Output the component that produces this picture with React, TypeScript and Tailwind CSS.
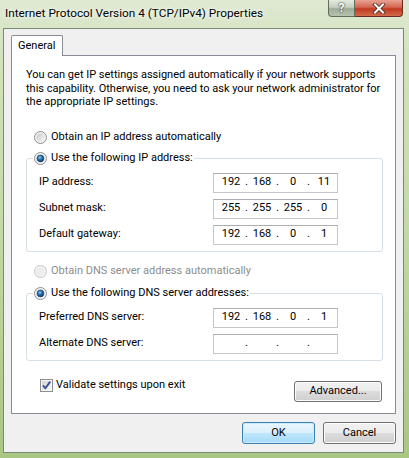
import React from 'react';

const Radio = ({ checked, disabled }: { checked?: boolean; disabled?: boolean }) => (
  <svg width="13" height="13" viewBox="0 0 13 13" className="shrink-0">
    <defs>
      <linearGradient id="radioIn" x1="0" y1="0" x2="1" y2="1">
        <stop offset="0" stopColor="#c9c9c9" />
        <stop offset="1" stopColor="#f7f7f7" />
      </linearGradient>
      <radialGradient id="radioDot" cx="0.4" cy="0.35" r="0.7">
        <stop offset="0" stopColor="#8fd0f5" />
        <stop offset="0.45" stopColor="#2a6fb0" />
        <stop offset="1" stopColor="#0d2f5c" />
      </radialGradient>
    </defs>
    <circle cx="6.5" cy="6.5" r="6" fill="#f4f4f4" stroke={disabled ? '#c4c4c4' : '#8c8f92'} />
    <circle cx="6.5" cy="6.5" r="4.3" fill={disabled ? '#ececec' : 'url(#radioIn)'} />
    {checked && <circle cx="6.5" cy="6.5" r="3.4" fill="url(#radioDot)" stroke="#1b3f6a" strokeWidth="0.6" />}
  </svg>
);

const Checkbox = () => (
  <svg width="13" height="13" viewBox="0 0 13 13" className="shrink-0">
    <defs>
      <linearGradient id="cbIn" x1="0" y1="0" x2="1" y2="1">
        <stop offset="0" stopColor="#d2d2d2" />
        <stop offset="1" stopColor="#fbfbfb" />
      </linearGradient>
    </defs>
    <rect x="0.5" y="0.5" width="12" height="12" fill="#f6f6f6" stroke="#8e8f8f" />
    <rect x="2" y="2" width="9" height="9" fill="url(#cbIn)" />
    <path d="M3 6.3 L5.4 9.3 L10.2 2.6" fill="none" stroke="#3c4f8f" strokeWidth="1.9" strokeLinejoin="round" />
  </svg>
);

const IpBox = ({ parts }: { parts: string[] }) => (
  <div className="w-[125px] h-[20px] border border-[#c3c7cc] border-t-[#abadb3] bg-white flex items-center pl-[4px]">
    {parts.map((p, i) => (
      <React.Fragment key={i}>
        {i > 0 && <span className="w-[5px] text-center">.</span>}
        <span className="w-[26px] text-center">{p}</span>
      </React.Fragment>
    ))}
  </div>
);

const FieldRow = ({ label, parts }: { label: string; parts: string[] }) => (
  <div className="flex items-center h-[20px] pl-[6px]">
    <span className="w-[174px]">{label}</span>
    <IpBox parts={parts} />
  </div>
);

const Group = ({ legend, children }: { legend: string; children: React.ReactNode }) => (
  <fieldset className="border border-[#d5dfe5] rounded-[3px] pl-[6px] pr-0 pb-[6px]">
    <legend className="px-[1px] h-[16px] flex items-center gap-[4px]">
      <Radio checked />
      <span>{legend}</span>
    </legend>
    <div className="flex flex-col gap-[6px] mt-[6px]">{children}</div>
  </fieldset>
);

const WinButton = ({ label, primary }: { label: string; primary?: boolean }) => (
  <div
    className={
      primary
        ? 'w-[73px] h-[22px] rounded-[3px] border border-[#3c7fb1] bg-[linear-gradient(180deg,#eaf6fd_0%,#d9f0fc_50%,#bee6fd_50%,#a7d9f5_100%)] flex items-center justify-center shadow-[inset_0_0_0_1px_#c9ecff]'
        : 'w-[73px] h-[22px] rounded-[3px] border border-[#707070] bg-[linear-gradient(180deg,#f2f2f2_0%,#ebebeb_50%,#dddddd_50%,#cfcfcf_100%)] flex items-center justify-center shadow-[inset_0_0_0_1px_#fcfcfc]'
    }
  >
    {label}
  </div>
);

export default function App() {
  return (
    <div className="w-[409px] h-[458px] overflow-hidden flex flex-col text-[11px] text-black font-['Roboto','Noto_Sans',sans-serif] bg-[linear-gradient(180deg,#dfe9d2_0%,#d2e2bd_12%,#c3d9a6_50%,#a9c683_100%)]">
      {/* title bar */}
      <div className="h-[28px] flex items-start shrink-0">
        <span className="pl-[5px] pt-[5px] text-[11.8px] leading-[16px] [text-shadow:0_0_6px_#ffffff,0_0_3px_#ffffff]">
          Internet Protocol Version 4 (TCP/IPv4) Properties
        </span>
        <div className="ml-auto mr-[6px] flex">
          <div className="w-[27px] h-[17px] rounded-bl-[4px] border border-t-0 border-[#5f6d5a] bg-[linear-gradient(180deg,#e4ebdf_0%,#c5d0bf_45%,#9eab97_55%,#b7c3b0_100%)] flex items-center justify-center text-white font-bold text-[12px] leading-none [text-shadow:0_0_2px_#333,0_0_1px_#333]">
            ?
          </div>
          <div className="w-[48px] h-[17px] rounded-br-[4px] border border-t-0 border-l-0 border-[#6b2a20] bg-[linear-gradient(180deg,#e9a393_0%,#d4654f_45%,#c0391f_55%,#d46a4c_100%)] flex items-center justify-center">
            <svg width="14" height="11" viewBox="0 0 14 11">
              <path d="M3 1.5 L11 9.5 M11 1.5 L3 9.5" stroke="#4a2a25" strokeWidth="3.6" strokeLinecap="square" />
              <path d="M3 1.5 L11 9.5 M11 1.5 L3 9.5" stroke="#ffffff" strokeWidth="2" strokeLinecap="square" />
            </svg>
          </div>
        </div>
      </div>

      {/* client area */}
      <div className="ml-[3px] w-[401px] h-[425px] border border-[#7b8a75] bg-[#f0f0f0] flex flex-col px-[7px] pt-[6px]">
        {/* tab */}
        <div className="flex">
          <div className="relative z-10 -mb-px w-[52px] h-[21px] border border-b-0 border-[#898c95] bg-white flex items-center pl-[6px] rounded-t-[2px]">
            General
          </div>
        </div>

        {/* panel */}
        <div className="h-[359px] border border-[#898c95] bg-white pl-[14px] pr-[12px] pt-[12px] flex flex-col">
          <p className="leading-[13.5px]">
            You can get IP settings assigned automatically if your network supports this capability. Otherwise, you need to ask your network administrator for the appropriate IP settings.
          </p>

          <div className="mt-[21px] h-[16px] flex items-center gap-[4px] pl-[8px]">
            <Radio />
            <span>Obtain an IP address automatically</span>
          </div>

          <div className="mt-[5px]">
            <Group legend="Use the following IP address:">
              <FieldRow label="IP address:" parts={['192', '168', '0', '11']} />
              <FieldRow label="Subnet mask:" parts={['255', '255', '255', '0']} />
              <FieldRow label="Default gateway:" parts={['192', '168', '0', '1']} />
            </Group>
          </div>

          <div className="mt-[12px] h-[16px] flex items-center gap-[4px] pl-[8px] text-[#8d8d8d]">
            <Radio disabled />
            <span>Obtain DNS server address automatically</span>
          </div>

          <div className="mt-[6px]">
            <Group legend="Use the following DNS server addresses:">
              <FieldRow label="Preferred DNS server:" parts={['192', '168', '0', '1']} />
              <FieldRow label="Alternate DNS server:" parts={['', '', '', '']} />
            </Group>
          </div>

          <div className="mt-[17px] flex items-start justify-between">
            <div className="h-[16px] flex items-center gap-[3px] pl-[14px]">
              <Checkbox />
              <span>Validate settings upon exit</span>
            </div>
            <div className="mt-[3px] mr-[1px] w-[88px] h-[21px] rounded-[3px] border border-[#707070] bg-[linear-gradient(180deg,#f2f2f2_0%,#ebebeb_50%,#dddddd_50%,#cfcfcf_100%)] shadow-[inset_0_0_0_1px_#fcfcfc] flex items-center justify-center">
              Advanced...
            </div>
          </div>
        </div>

        {/* dialog buttons */}
        <div className="mt-[8px] flex justify-end gap-[8px]">
          <WinButton label="OK" primary />
          <WinButton label="Cancel" />
        </div>
      </div>
    </div>
  );
}
